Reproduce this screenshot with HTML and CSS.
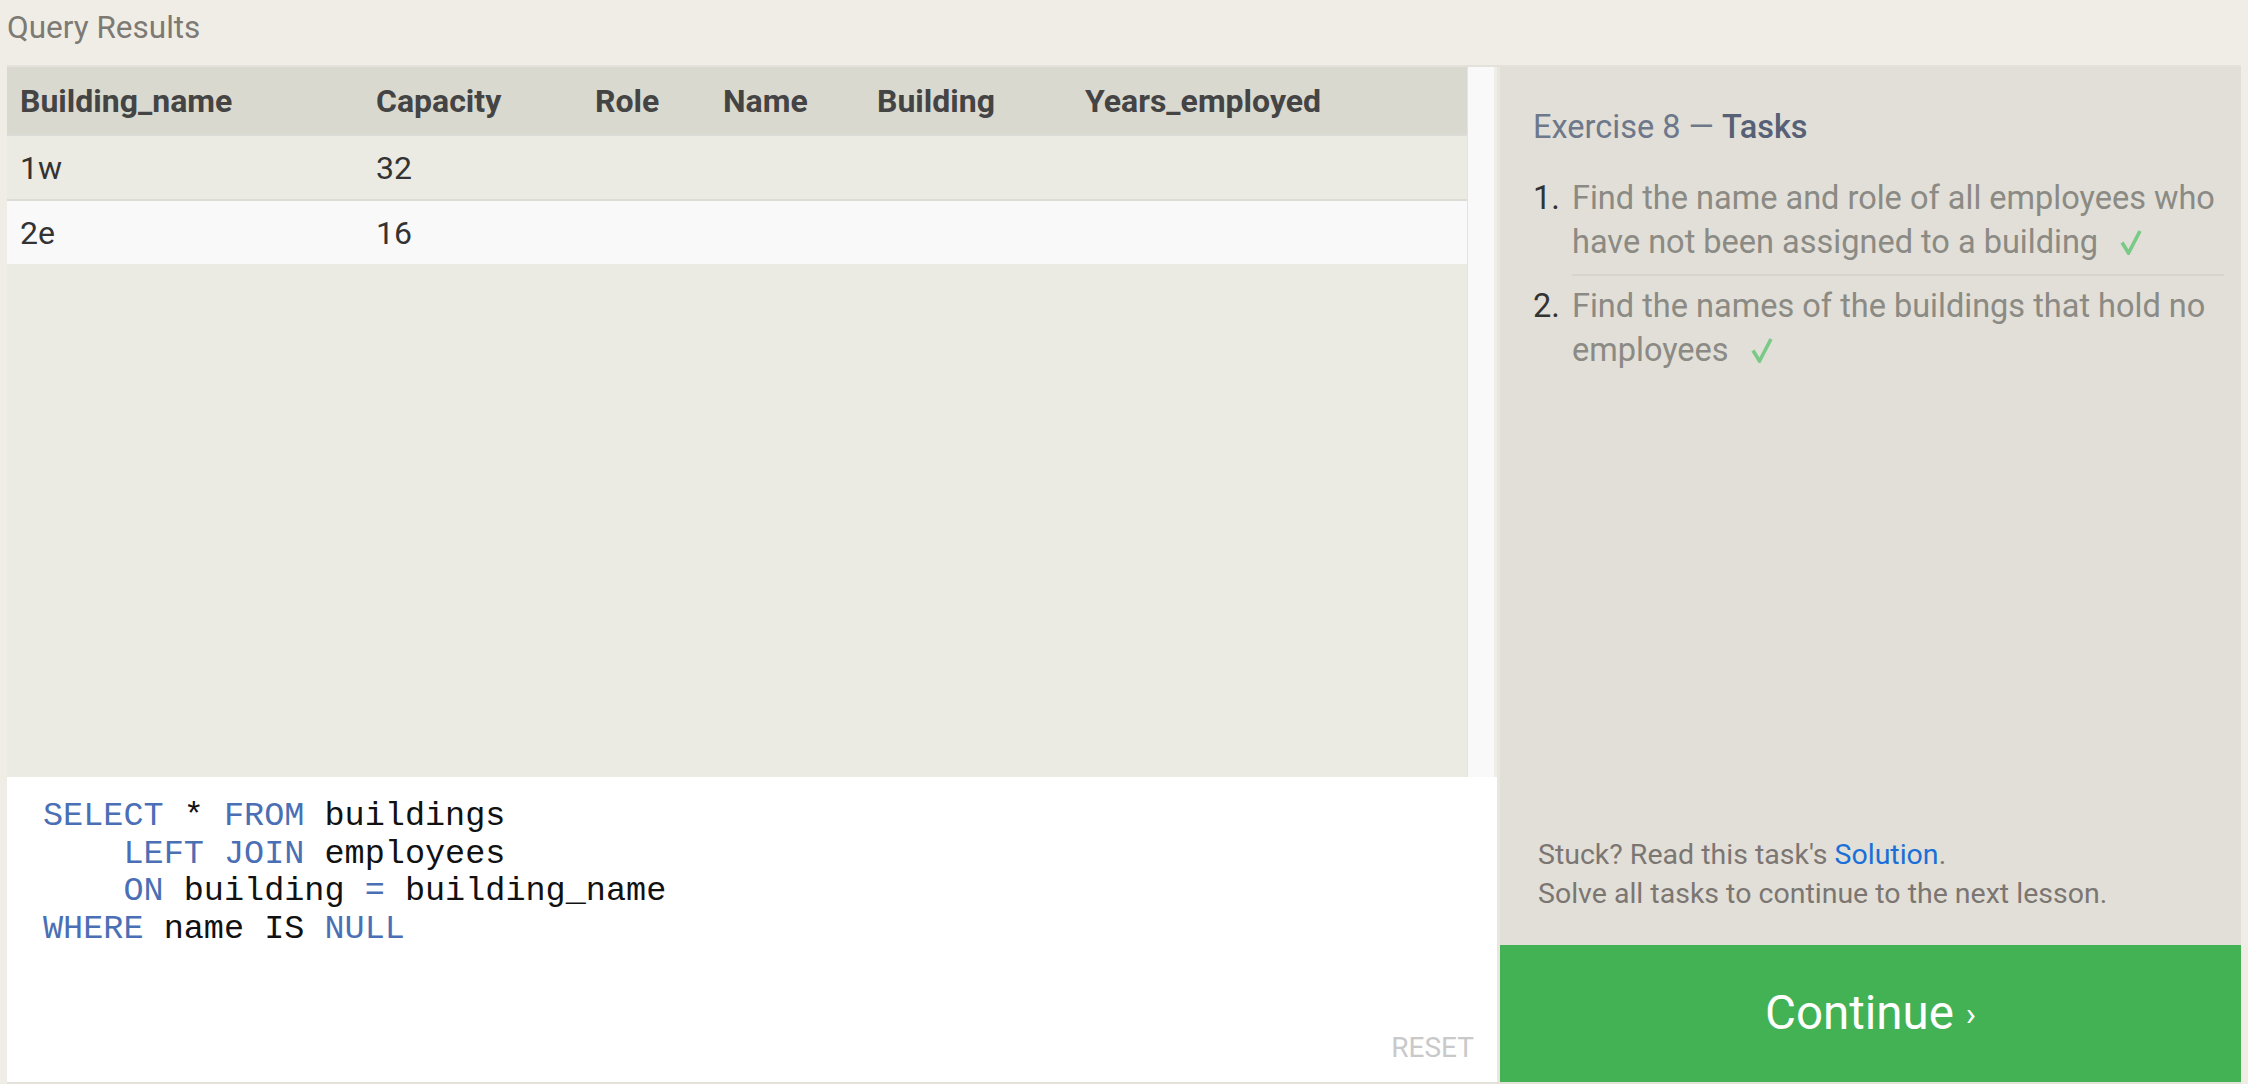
FILE: index.html
```html
<!DOCTYPE html>
<html>
<head>
<meta charset="utf-8">
<title>Query Results</title>
<link rel="stylesheet" href="styles.css">
</head>
<body>
<div class="page">
  <div class="title">Query Results</div>
  <div class="main">
    <div class="left">
      <div class="results">
        <div class="table-wrap">
          <table class="grid">
            <thead>
              <tr>
                <th class="c1">Building_name</th>
                <th class="c2">Capacity</th>
                <th class="c3">Role</th>
                <th class="c4">Name</th>
                <th class="c5">Building</th>
                <th class="c6">Years_employed</th>
              </tr>
            </thead>
            <tbody>
              <tr class="odd"><td>1w</td><td>32</td><td></td><td></td><td></td><td></td></tr>
              <tr class="even"><td>2e</td><td>16</td><td></td><td></td><td></td><td></td></tr>
            </tbody>
          </table>
        </div>
        <div class="scroll"></div>
      </div>
      <div class="editor">
        <div class="code">
          <div class="line"><span class="kw">SELECT</span> * <span class="kw">FROM</span> buildings</div>
          <div class="line">    <span class="kw">LEFT JOIN</span> employees</div>
          <div class="line">    <span class="kw">ON</span> building <span class="kw">=</span> building_name</div>
          <div class="line"><span class="kw">WHERE</span> name IS <span class="kw">NULL</span></div>
        </div>
        <div class="reset">RESET</div>
      </div>
    </div>
    <div class="right">
      <div class="tasks">
        <h2 class="heading">Exercise 8 — <span class="strong">Tasks</span></h2>
        <ol class="task-list">
          <li class="task"><span class="num">1.</span><span class="txt">Find the name and role of all employees who have not been assigned to a building <svg class="check" width="22" height="26" viewBox="0 0 22 26"><path d="M2 13.5 L8.5 24 L20 2" fill="none" stroke="#79c987" stroke-width="3.6" stroke-linejoin="miter" stroke-linecap="butt"/></svg></span></li>
          <li class="task"><span class="num">2.</span><span class="txt">Find the names of the buildings that hold no employees <svg class="check" width="22" height="26" viewBox="0 0 22 26"><path d="M2 13.5 L8.5 24 L20 2" fill="none" stroke="#79c987" stroke-width="3.6" stroke-linejoin="miter" stroke-linecap="butt"/></svg></span></li>
        </ol>
      </div>
      <div class="help">
        <div>Stuck? Read this task's <a class="link" href="#">Solution</a>.</div>
        <div>Solve all tasks to continue to the next lesson.</div>
      </div>
      <div class="continue">Continue <span class="chev">›</span></div>
    </div>
  </div>
</div>
</body>
</html>
```
FILE: styles.css
```css
html, body {
  margin: 0;
  padding: 0;
}
body {
  background: #f0ede6;
  font-family: Roboto, "Open Sans", sans-serif;
  width: 2248px;
  height: 1084px;
  overflow: hidden;
}
.page {
  display: flex;
  flex-direction: column;
  height: 1084px;
}
.title {
  height: 65px;
  box-sizing: border-box;
  padding: 8px 0 0 7px;
  font-size: 31.5px;
  line-height: 40px;
  color: #7d7a74;
}
.main {
  display: flex;
  margin: 0 7px;
  height: 1019px;
  border-top: 2px solid #e3e1d9;
  border-bottom: 2px solid #e3e1d9;
  box-sizing: border-box;
}
.left {
  width: 1490px;
  display: flex;
  flex-direction: column;
}
.results {
  height: 710px;
  display: flex;
}
.table-wrap {
  width: 1460px;
  background: #ebeae3;
}
.scroll {
  width: 26px;
  background: #f9f9f9;
  border-left: 1px solid #e4e3dc;
}
.grid {
  border-collapse: collapse;
  table-layout: fixed;
  width: 1460px;
  font-size: 32px;
  color: #333;
}
.grid th {
  background: #dad9d0;
  color: #444;
  font-weight: 700;
  text-align: left;
  height: 68px;
  padding: 0 0 0 13px;
  box-sizing: border-box;
}
.grid td {
  height: 63px;
  padding: 0 0 0 13px;
  border-top: 2px solid #dcdcd6;
}
.c1 { width: 356px; }
.c2 { width: 219px; }
.c3 { width: 128px; }
.c4 { width: 154px; }
.c5 { width: 208px; }
.grid tr.odd td { background: #ebeae3; }
.grid tr.even td { background: #f9f9f9; }
.editor {
  position: relative;
  flex: 1;
  background: #ffffff;
  padding: 21px 0 0 36px;
}
.code {
  font-family: "Liberation Mono", "Courier New", monospace;
  font-size: 33.5px;
  line-height: 37.5px;
  color: #111;
}
.line {
  white-space: pre;
  height: 37.5px;
}
.kw { color: #4b6fb5; }
.reset {
  position: absolute;
  right: 23px;
  bottom: 18px;
  font-size: 28px;
  color: #c9c9c9;
}
.right {
  width: 744px;
  display: flex;
  flex-direction: column;
  background: #e1dfd7;
  border-left: 3px solid #e8e6df;
  box-sizing: border-box;
}
.tasks {
  flex: 1;
  padding: 40px 17px 0 33px;
}
.heading {
  margin: 0;
  font-size: 32.5px;
  line-height: 40px;
  font-weight: 400;
  color: #6e788b;
}
.strong {
  color: #566076;
  font-weight: 500;
}
.task-list {
  list-style: none;
  margin: 29px 0 0 0;
  padding: 0;
}
.task {
  display: flex;
  font-size: 32.5px;
  line-height: 44px;
}
.task:first-child .txt {
  padding-bottom: 10px;
  border-bottom: 2px solid #d6d4cb;
  margin-bottom: 8px;
}
.num {
  width: 39px;
  flex: none;
  color: #333;
}
.txt {
  flex: 1;
  color: #8b8a84;
}
.check {
  margin-left: 14px;
  vertical-align: -2px;
}
.help {
  padding: 0 0 32px 38px;
  font-size: 28.5px;
  line-height: 39px;
  color: #7c7673;
}
.link {
  color: #1a6fd8;
  text-decoration: none;
}
.continue {
  height: 137px;
  background: #42b254;
  color: #fff;
  font-size: 47.5px;
  line-height: 137px;
  text-align: center;
}
.chev {
  font-size: 34px;
  vertical-align: 3px;
}
```
